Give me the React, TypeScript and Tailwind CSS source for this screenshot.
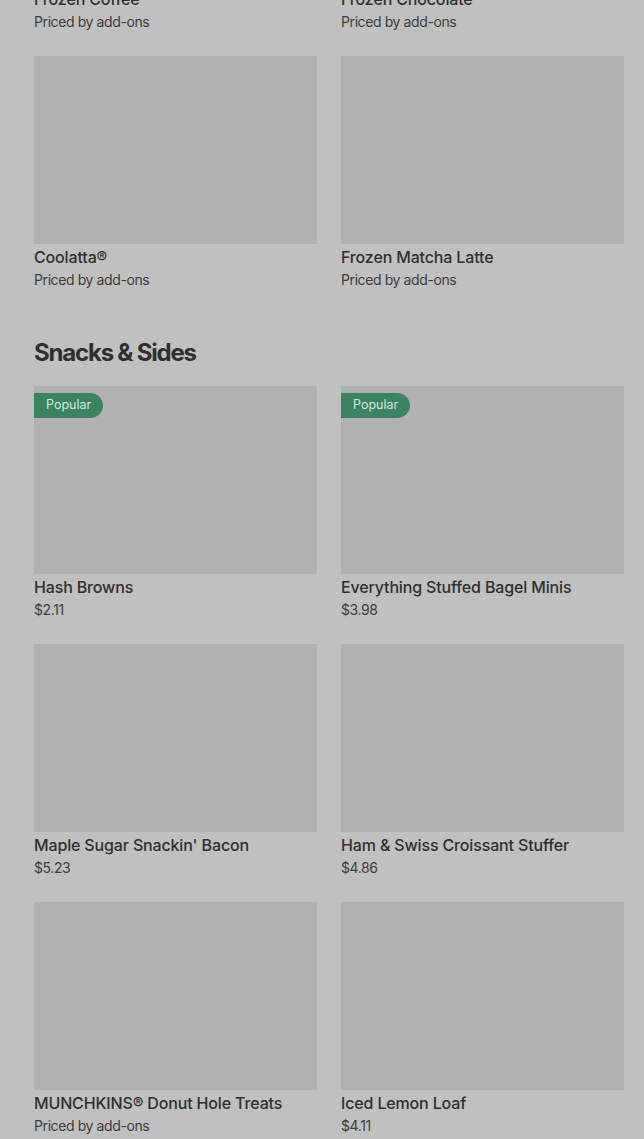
import React from "react";

type Item = { name: string; sub: string; popular?: boolean };

const topItems: Item[] = [
  { name: "Frozen Coffee", sub: "Priced by add-ons" },
  { name: "Frozen Chocolate", sub: "Priced by add-ons" },
  { name: "Coolatta®", sub: "Priced by add-ons" },
  { name: "Frozen Matcha Latte", sub: "Priced by add-ons" },
];

const snacks: Item[] = [
  { name: "Hash Browns", sub: "$2.11", popular: true },
  { name: "Everything Stuffed Bagel Minis", sub: "$3.98", popular: true },
  { name: "Maple Sugar Snackin' Bacon", sub: "$5.23" },
  { name: "Ham & Swiss Croissant Stuffer", sub: "$4.86" },
  { name: "MUNCHKINS® Donut Hole Treats", sub: "Priced by add-ons" },
  { name: "Iced Lemon Loaf", sub: "$4.11" },
];

function Card({ item }: { item: Item }) {
  return (
    <div className="flex flex-col">
      <div className="relative h-[188px] bg-[#b1b1b1]">
        {item.popular && (
          <span className="absolute left-0 top-[7px] flex h-[25px] items-center rounded-r-full bg-[#3b8461] px-3 text-[12.5px] text-[#d8e7df]">
            Popular
          </span>
        )}
      </div>
      <div className="mt-[2px] text-[16px] font-medium leading-[22px] tracking-[-0.15px] text-[#2f2f2f]">{item.name}</div>
      <div className="text-[14px] leading-[24px] tracking-[-0.4px] text-[#3d3d3d]">{item.sub}</div>
    </div>
  );
}

export default function App() {
  return (
    <div
      className="h-[1139px] overflow-hidden bg-[#c0c0c0] pl-[34px] pr-[20px]"
      style={{ fontFamily: "Inter, 'Noto Sans', sans-serif" }}
    >
      <div className="-mt-[202px] grid grid-cols-2 gap-x-[24px] gap-y-[22px]">
        {topItems.map((it) => (
          <Card key={it.name} item={it} />
        ))}
      </div>
      <h2 className="mt-[45px] text-[24px] font-bold leading-[32px] tracking-[-1.2px] text-[#2f2f2f]">
        Snacks &amp; Sides
      </h2>
      <div className="mt-[17px] grid grid-cols-2 gap-x-[24px] gap-y-[22px]">
        {snacks.map((it) => (
          <Card key={it.name} item={it} />
        ))}
      </div>
    </div>
  );
}
